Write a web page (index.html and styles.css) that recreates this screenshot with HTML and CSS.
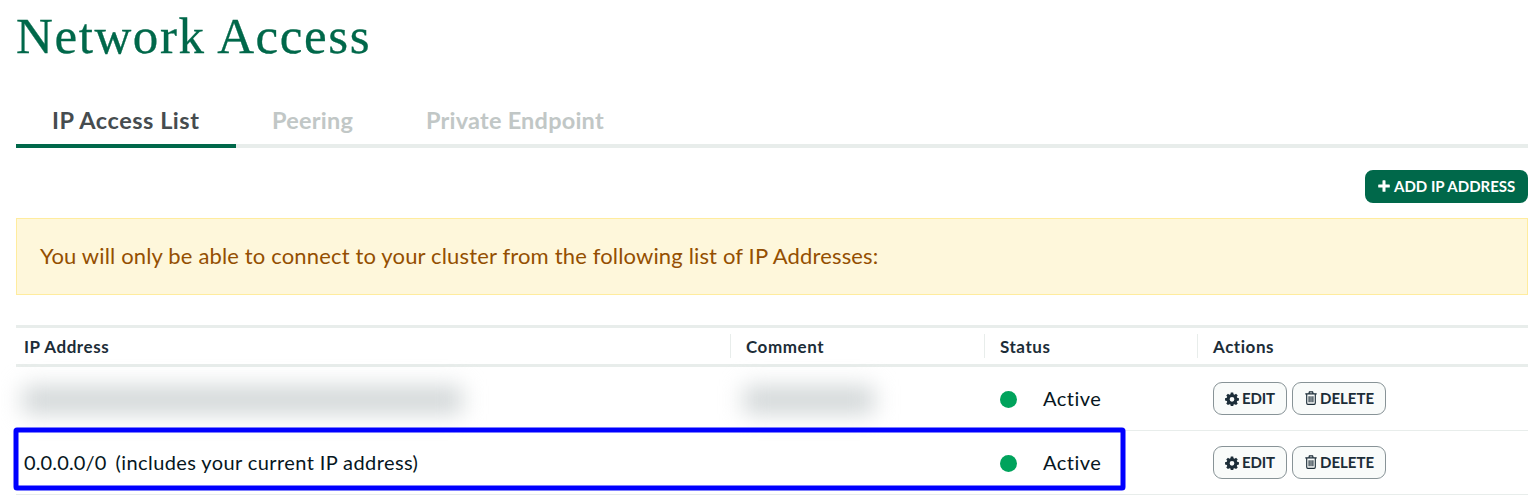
FILE: index.html
```html
<!DOCTYPE html>
<html lang="en">
<head>
<meta charset="utf-8">
<title>Network Access</title>
<link rel="stylesheet" href="styles.css">
</head>
<body>
<svg class="sprite" aria-hidden="true">
  <symbol id="gear" viewBox="0 0 14 14"><path fill-rule="evenodd" d="M5.8.5h2.4l.35 1.75 1 .42L11.05 1.7l1.7 1.7-.97 1.46.4 1 1.77.34v2.4l-1.77.34-.4 1 .97 1.46-1.7 1.7-1.5-.97-1 .42-.35 1.75H5.8l-.35-1.75-1-.42-1.5.97-1.7-1.7.97-1.46-.4-1L.05 8.6V6.2l1.77-.34.4-1L1.25 3.4l1.7-1.7 1.5.97 1-.42zM7 5a2.3 2.3 0 1 0 0 4.7A2.3 2.3 0 0 0 7 5z" fill="currentColor"/></symbol>
  <symbol id="trash" viewBox="0 0 12 14"><path d="M.3 2.9h11.4M3.9 2.7l.5-1.9h3.2l.5 1.9M1.7 3v9.1q0 1.3 1.1 1.3h6.4q1.1 0 1.1-1.3V3M4.1 5.2v6M6 5.2v6M7.9 5.2v6" fill="none" stroke="currentColor" stroke-width="1.15"/></symbol>
  <symbol id="plus" viewBox="0 0 12 12"><path d="M4.5.8q0-.6.6-.6h1.8q.6 0 .6.6v3.7h3.7q.6 0 .6.5v2q0 .5-.6.5H7.5v3.7q0 .6-.6.6H5.1q-.6 0-.6-.6V7.5H.8Q.2 7.5.2 7V5q0-.5.6-.5h3.7z" fill="currentColor"/></symbol>
</svg>
<main class="page">
  <h1 class="title">Network Access</h1>
  <nav class="tabs">
    <a class="tab tab-active">IP Access List</a>
    <a class="tab">Peering</a>
    <a class="tab">Private Endpoint</a>
  </nav>
  <div class="toolbar">
    <button class="add"><svg class="i-plus"><use href="#plus"/></svg><span>ADD IP ADDRESS</span></button>
  </div>
  <div class="notice"><span>You will only be able to connect to your cluster from the following list of IP Addresses:</span></div>
  <section class="table">
    <div class="row head">
      <div class="th">IP Address</div>
      <div class="th split">Comment</div>
      <div class="th split">Status</div>
      <div class="th split">Actions</div>
    </div>
    <div class="row">
      <div class="cell"><i class="redacted redacted-ip"></i></div>
      <div class="cell"><i class="redacted redacted-comment"></i></div>
      <div class="cell status"><i class="dot"></i><span>Active</span></div>
      <div class="cell actions">
        <button class="btn edit"><svg class="i-gear"><use href="#gear"/></svg><span>EDIT</span></button>
        <button class="btn delete"><svg class="i-trash"><use href="#trash"/></svg><span>DELETE</span></button>
      </div>
    </div>
    <div class="row selected">
      <div class="cell ip"><span class="addr">0.0.0.0/0</span><span class="hint">(includes your current IP address)</span></div>
      <div class="cell"></div>
      <div class="cell status"><i class="dot"></i><span>Active</span></div>
      <div class="cell actions">
        <button class="btn edit"><svg class="i-gear"><use href="#gear"/></svg><span>EDIT</span></button>
        <button class="btn delete"><svg class="i-trash"><use href="#trash"/></svg><span>DELETE</span></button>
      </div>
      <svg class="outline" viewBox="0 0 1113 64"><rect x="3" y="3" width="1107" height="58" rx="1" fill="none" stroke="#00f" stroke-width="5" stroke-linejoin="round"/></svg>
    </div>
  </section>
</main>
</body>
</html>
```
FILE: styles.css
```css
* { box-sizing: border-box; }
body {
  margin: 0;
  height: 504px;
  overflow: hidden;
  background: #fff;
  color: #061621;
  font-family: Lato, "Liberation Sans", sans-serif;
  font-variant-ligatures: none;
}
.sprite { display: none; }
svg { display: block; flex: none; }
.page { padding: 0 11px 0 16px; }
.title {
  margin: 0;
  height: 98px;
  padding-top: 6px;
  font: 400 51px/60px "Liberation Serif", serif;
  letter-spacing: 1.6px;
  -webkit-text-stroke: 0.3px #00684a;
  color: #00684a;
}
.tabs {
  display: flex;
  height: 50px;
  border-bottom: 4px solid #e8edeb;
}
.tab {
  height: 50px;
  padding: 0 36px;
  font-size: 23.5px;
  font-weight: 700;
  line-height: 44px;
  letter-spacing: 0.22px;
  white-space: nowrap;
  color: #c1c7c6;
}
.tab-active {
  width: 220px;
  border-bottom: 4px solid #00684a;
  letter-spacing: 0.52px;
  color: #464c4f;
}
.tab + .tab { width: 154px; }
.toolbar { display: flex; justify-content: flex-end; padding: 22px 0 15px; }
button { font-family: inherit; margin: 0; white-space: nowrap; }
.add {
  display: flex;
  align-items: center;
  gap: 4px;
  width: 163px;
  height: 33px;
  padding: 0 0 0 13px;
  border: 0;
  border-radius: 8px;
  background: #00684a;
  color: #fff;
  font-size: 15px;
  font-weight: 700;
}
.add span, .btn span { margin-top: -2px; }
.i-plus { width: 12px; height: 12px; margin-top: -2px; }
.notice {
  height: 77px;
  padding-left: 23px;
  border: 1px solid #ffec9e;
  background: #fef7db;
  color: #944f01;
  font-size: 22px;
  line-height: 73px;
  letter-spacing: 0.155px;
}
.table { margin-top: 30px; }
.row {
  display: grid;
  grid-template-columns: 714px 254px 213px 331px;
  height: 64px;
  border-bottom: 1px solid #e8edeb;
}
.head {
  height: 42px;
  border-top: 3px solid #e8edeb;
  border-bottom: 3px solid #e8edeb;
  align-items: center;
}
.th {
  height: 24px;
  padding-left: 8px;
  line-height: 25px;
  font-size: 17px;
  font-weight: 700;
  letter-spacing: 0.55px;
  color: #1c2d38;
}
.split { border-left: 1px solid #e8edeb; padding-left: 15px; }
.cell { display: flex; align-items: center; font-size: 20px; }
.redacted { height: 28px; filter: blur(11px); background: #d2d7d8; }
.redacted-ip { width: 439px; margin: 2px 0 0 7px; }
.redacted-comment { width: 130px; margin: 2px 0 0 14px; }
.ip { padding-left: 8px; }
.ip span { margin-top: -2px; }
.addr { letter-spacing: 0.15px; }
.ip .hint { margin-left: 9px; letter-spacing: 0.4px; }
.status { gap: 26px; padding-left: 16px; letter-spacing: 0.5px; }
.status span { margin-top: -2px; }
.dot { width: 17px; height: 17px; margin-top: 1px; border-radius: 50%; background: #00a35c; }
.actions { gap: 5px; padding-left: 16px; }
.btn {
  display: flex;
  align-items: center;
  gap: 3px;
  height: 33px;
  padding: 0 0 0 12px;
  border: 1px solid #889397;
  border-radius: 9px;
  background: #f9fbfa;
  color: #1c2d38;
  font-size: 15px;
  font-weight: 700;
}
.edit { width: 74px; padding-left: 11px; }
.delete { width: 94px; }
.edit span { letter-spacing: -0.15px; }
.i-gear { width: 14px; height: 14px; }
.i-trash { width: 12px; height: 14px; margin-top: -1px; }
.selected { position: relative; }
.outline {
  position: absolute;
  left: -3px;
  top: -4px;
  width: 1113px;
  height: 64px;
}
```
